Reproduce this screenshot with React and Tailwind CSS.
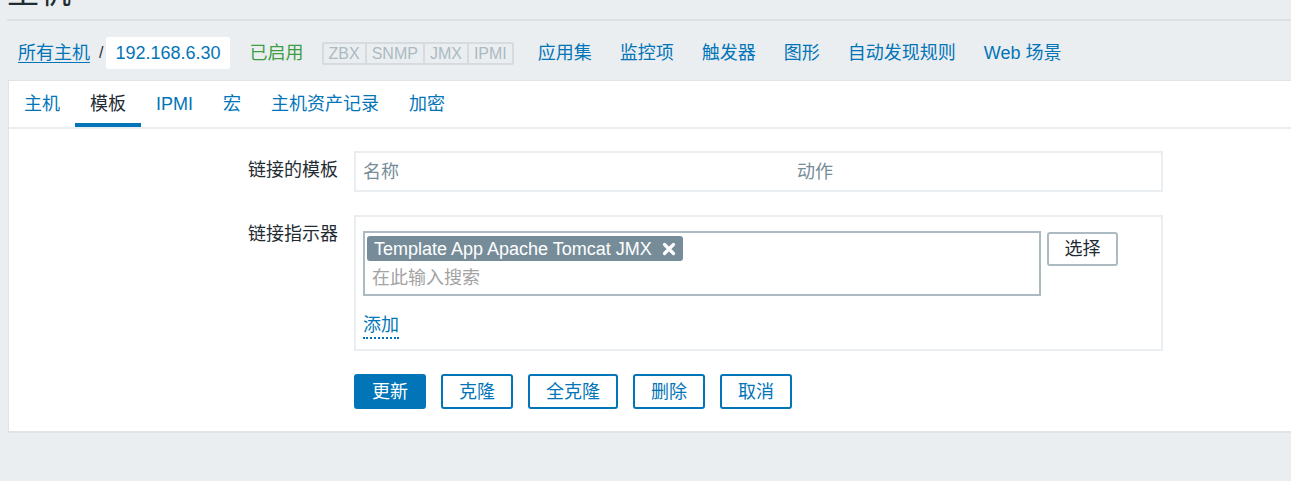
import { useState } from 'react';

const NAV = ['应用集', '监控项', '触发器', '图形', '自动发现规则', 'Web 场景'];
const TABS = ['主机', '模板', 'IPMI', '宏', '主机资产记录', '加密'];
const BADGES = ['ZBX', 'SNMP', 'JMX', 'IPMI'];
const ACTIONS = ['克隆', '全克隆', '删除', '取消'];

export default function App() {
  const [tab, setTab] = useState('模板');

  return (
    <div className="h-[481px] overflow-hidden bg-[#ebeef0] font-['Liberation_Sans','Noto_Sans_CJK_SC',sans-serif] text-[18px] text-[#1f2c33]">
      {/* Page title, scrolled mostly out of view */}
      <div className="ml-[7px] h-[21px] overflow-hidden border-b-2 border-[#dde1e4]">
        <h1 className="-mt-[24px] text-[32px] leading-[32px]">主机</h1>
      </div>

      {/* Breadcrumbs + host navigation */}
      <div className="mt-[16px] flex h-[32px] items-center pl-[18px] leading-[24px]">
        <a className="cursor-pointer text-[#0275b8] underline underline-offset-[3px]">所有主机</a>
        <span className="ml-[9px] text-[16px]">/</span>
        <span className="ml-[3px] flex h-[32px] items-center rounded-[2px] bg-white px-[9px] text-[#0275b8]">192.168.6.30</span>
        <span className="ml-[20px] text-[#3e9e46]">已启用</span>
        <div className="ml-[18px] flex rounded-[2px] border-2 border-[#d5dbde]">
          {BADGES.map((b, i) => (
            <span
              key={b}
              className={`px-[5px] text-[16px] leading-[19px] text-[#acbbc2] ${i > 0 ? 'border-l-2 border-[#d5dbde]' : ''}`}
            >
              {b}
            </span>
          ))}
        </div>
        <div className="ml-[24px] flex gap-[28px] text-[#0275b8]">
          {NAV.map((n) => (
            <a key={n} className="cursor-pointer">{n}</a>
          ))}
        </div>
      </div>

      {/* Form panel */}
      <div className="mt-[11px] ml-[8px] border-t border-b-2 border-l border-[#dfe4e7] bg-white">
        <div className="flex h-[48px] border-b-2 border-[#ebeef0]">
          {TABS.map((t) => (
            <button
              key={t}
              onClick={() => setTab(t)}
              className={`flex cursor-pointer items-center border-y-4 border-t-transparent px-[15px] ${
                tab === t ? 'border-b-[#0275b8] text-[#1f2c33]' : 'border-b-transparent text-[#0275b8]'
              }`}
            >
              {t}
            </button>
          ))}
        </div>

        <div className="flex flex-col gap-[23px] pt-[22px] pb-[22px] leading-[24px]">
          {/* Linked templates */}
          <div className="flex gap-[16px]">
            <label className="w-[329px] pt-[7px] text-right">链接的模板</label>
            <div className="flex h-[41px] w-[809px] items-center border-2 border-[#ebeef0] px-[7px] text-[#768d99]">
              <span className="w-[434px]">名称</span>
              <span>动作</span>
            </div>
          </div>

          {/* Link new templates */}
          <div className="flex gap-[16px]">
            <label className="w-[329px] pt-[7px] text-right">链接指示器</label>
            <div className="w-[809px] border-2 border-[#ebeef0] px-[7px] pt-[14px] pb-[10px]">
              <div className="flex items-start gap-[6px]">
                <div className="h-[65px] w-[678px] border-2 border-[#acbbc2] px-[2px] pt-[3px]">
                  <span className="inline-flex h-[25px] items-center gap-[10px] rounded-[3px] bg-[#768d99] px-[7px] text-white">
                    Template App Apache Tomcat JMX
                    <svg width="14" height="14" viewBox="0 0 14 14">
                      <path d="M2.5 2.5 L11.5 11.5 M11.5 2.5 L2.5 11.5" stroke="white" strokeWidth="3.2" strokeLinecap="round" />
                    </svg>
                  </span>
                  <div className="mt-[2px] pl-[5px] leading-[30px] text-[#a3a3a3]">在此输入搜索</div>
                </div>
                <button className="mt-[1px] h-[34px] w-[71px] cursor-pointer rounded-[3px] border-2 border-[#acbbc2] text-[#1f2c33]">选择</button>
              </div>
              <a className="mt-[17px] inline-block cursor-pointer border-b-2 border-dotted border-[#0275b8] text-[#0275b8]">添加</a>
            </div>
          </div>

          {/* Form buttons */}
          <div className="flex gap-[16px]">
            <div className="w-[329px]" />
            <div className="flex gap-[15px]">
              <button className="h-[35px] cursor-pointer rounded-[3px] border-2 border-[#0275b8] bg-[#0275b8] px-[16px] text-white">更新</button>
              {ACTIONS.map((a) => (
                <button
                  key={a}
                  className="h-[35px] cursor-pointer rounded-[3px] border-2 border-[#0275b8] bg-white px-[16px] text-[#0275b8]"
                >
                  {a}
                </button>
              ))}
            </div>
          </div>
        </div>
      </div>
    </div>
  );
}
